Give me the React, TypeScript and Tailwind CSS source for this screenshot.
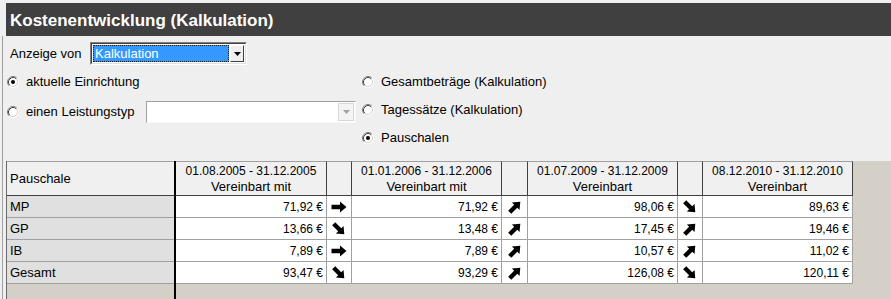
import React from 'react';

type Dir = 'right' | 'up' | 'down';

interface Row {
  label: string;
  values: string[];
  arrows: Dir[];
}

const rows: Row[] = [
  { label: 'MP', values: ['71,92 €', '71,92 €', '98,06 €', '89,63 €'], arrows: ['right', 'up', 'down'] },
  { label: 'GP', values: ['13,66 €', '13,48 €', '17,45 €', '19,46 €'], arrows: ['down', 'up', 'up'] },
  { label: 'IB', values: ['7,89 €', '7,89 €', '10,57 €', '11,02 €'], arrows: ['right', 'up', 'up'] },
  { label: 'Gesamt', values: ['93,47 €', '93,29 €', '126,08 €', '120,11 €'], arrows: ['down', 'up', 'down'] },
];

const periods = [
  { range: '01.08.2005 - 31.12.2005', note: 'Vereinbart mit' },
  { range: '01.01.2006 - 31.12.2006', note: 'Vereinbart mit' },
  { range: '01.07.2009 - 31.12.2009', note: 'Vereinbart' },
  { range: '08.12.2010 - 31.12.2010', note: 'Vereinbart' },
];

// widths of the value columns and of the arrow columns between them
const valueWidths = ['w-[151px]', 'w-[150px]', 'w-[150px]', 'w-[150px]'];
const arrowWidths = ['w-[25px]', 'w-[26px]', 'w-[25px]'];

// Thick black trend arrow, rotated for up/down
const Arrow = ({ dir }: { dir: Dir }) => {
  const angle = dir === 'right' ? 0 : dir === 'up' ? -45 : 45;
  return (
    <svg width="18" height="18" viewBox="0 0 18 18">
      <g transform={`rotate(${angle} 9 9)`}>
        <path d="M1.5 6.8H10V3.6L16.5 9L10 14.4V11.2H1.5Z" fill="#000" />
      </g>
    </svg>
  );
};

// Classic sunken radio button
const Radio = ({ checked }: { checked?: boolean }) => (
  <svg width="12" height="12" viewBox="0 0 12 12" className="shrink-0">
    <circle cx="6" cy="6" r="5" fill="#fff" />
    <path d="M9.89 2.11A5.5 5.5 0 0 0 2.11 9.89" stroke="#808080" fill="none" />
    <path d="M2.11 9.89A5.5 5.5 0 0 0 9.89 2.11" stroke="#fff" fill="none" />
    <path d="M9.18 2.82A4.5 4.5 0 0 0 2.82 9.18" stroke="#404040" fill="none" />
    <path d="M2.82 9.18A4.5 4.5 0 0 0 9.18 2.82" stroke="#d4d0c8" fill="none" />
    {checked && <circle cx="6" cy="6" r="2" fill="#000" />}
  </svg>
);

const RadioOption = ({ label, checked, className }: { label: string; checked?: boolean; className?: string }) => (
  <div className={`flex items-center gap-[7px] ${className ?? ''}`}>
    <Radio checked={checked} />
    <span className="text-[13px] text-black whitespace-nowrap">{label}</span>
  </div>
);

const DropTriangle = ({ color }: { color: string }) => (
  <svg width="7" height="4" viewBox="0 0 7 4">
    <path d="M0 0H7L3.5 4Z" fill={color} />
  </svg>
);

export default function App() {
  return (
    <div className="w-[891px] h-[299px] bg-[#efefef] pt-[3px] overflow-hidden font-['Liberation_Sans',Arial,sans-serif]">
      {/* Title bar */}
      <div className="ml-[6px] h-[33px] bg-[#404040] flex items-center pl-[4px] pt-[2px] text-white font-bold text-[17px]">
        Kostenentwicklung (Kalkulation)
      </div>

      <div className="ml-[2px] border-l border-[#a0a0a0] h-[263px] flex flex-col">
        {/* Controls */}
        <div className="h-[125px] shrink-0">
          <div className="mt-[6px] h-[23px] flex items-center pl-[7px]">
            <span className="w-[80px] shrink-0 text-[13px] text-black">Anzeige von</span>
            <div className="w-[157px] h-[23px] flex border border-t-[#808080] border-l-[#808080] border-b-white border-r-white">
              <div className="flex-1 flex border border-t-[#404040] border-l-[#404040] border-b-[#e0e0e0] border-r-[#e0e0e0] bg-white p-[1px]">
                <div className="flex-1 bg-[#3399ff] border border-dotted border-[#1a1a1a] flex items-center pl-[1px] text-white text-[13px]">
                  Kalkulation
                </div>
                <div className="w-[14px] ml-[1px] bg-[#efefef] border border-t-white border-l-white border-b-[#404040] border-r-[#404040] flex items-center justify-center">
                  <DropTriangle color="#000" />
                </div>
              </div>
            </div>
          </div>

          <div className="mt-[3px] flex">
            <div className="w-[359px] pl-[4px] flex flex-col">
              <RadioOption label="aktuelle Einrichtung" checked className="h-[28px]" />
              <div className="mt-[5px] h-[22px] flex items-center">
                <RadioOption label="einen Leistungstyp" className="w-[139px]" />
                <div className="w-[210px] h-[22px] bg-white border border-t-[#a0a0a0] border-l-[#a0a0a0] border-b-[#f8f8f8] border-r-[#f8f8f8] flex justify-end p-[1px]">
                  <div className="w-[16px] border border-[#d8d8d8] bg-[#f4f4f4] flex items-center justify-center">
                    <DropTriangle color="#a0a0a0" />
                  </div>
                </div>
              </div>
            </div>
            <div className="flex flex-col">
              <RadioOption label="Gesamtbeträge (Kalkulation)" className="h-[28px]" />
              <RadioOption label="Tagessätze (Kalkulation)" className="h-[28px]" />
              <RadioOption label="Pauschalen" checked className="h-[28px]" />
            </div>
          </div>
        </div>

        {/* Grid */}
        <div className="ml-[3px] flex-1 bg-[#d4d0c8] border-l border-[#696969] flex text-black">
          {/* Frozen column */}
          <div className="w-[167px] shrink-0 flex flex-col">
            <div className="h-[35px] bg-[#f0f0f0] border-t border-t-[#a0a0a0] border-b border-b-[#404040] flex items-center pl-[3px] text-[13px]">
              Pauschale
            </div>
            {rows.map((row) => (
              <div
                key={row.label}
                className="h-[22px] bg-[#e0e0e0] border-b border-[#a0a0a0] flex items-center pl-[3px] text-[13px]"
              >
                {row.label}
              </div>
            ))}
          </div>

          <div className="w-[2px] bg-black shrink-0" />

          {/* Period columns */}
          <div className="flex flex-col">
            <div className="flex h-[35px]">
              {periods.map((p, i) => (
                <React.Fragment key={p.range}>
                  <div
                    className={`${valueWidths[i]} h-[35px] bg-[#f0f0f0] border-t border-t-[#a0a0a0] border-b border-b-[#404040] border-r border-r-[#404040] flex flex-col items-center justify-center leading-[16px]`}
                  >
                    <span className="text-[12px]">{p.range}</span>
                    <span className="text-[13px]">{p.note}</span>
                  </div>
                  {i < 3 && (
                    <div
                      className={`${arrowWidths[i]} h-[35px] bg-[#f0f0f0] border-t border-t-[#a0a0a0] border-b border-b-[#404040] border-r border-r-[#404040]`}
                    />
                  )}
                </React.Fragment>
              ))}
            </div>
            {rows.map((row) => (
              <div key={row.label} className="flex h-[22px]">
                {row.values.map((v, i) => (
                  <React.Fragment key={i}>
                    <div
                      className={`${valueWidths[i]} h-[22px] bg-white border-b border-r border-[#a0a0a0] flex items-center justify-end pr-[3px] text-[12px]`}
                    >
                      {v}
                    </div>
                    {i < 3 && (
                      <div
                        className={`${arrowWidths[i]} h-[22px] bg-white border-b border-r border-[#a0a0a0] flex items-center justify-center`}
                      >
                        <Arrow dir={row.arrows[i]} />
                      </div>
                    )}
                  </React.Fragment>
                ))}
              </div>
            ))}
          </div>
        </div>
      </div>
    </div>
  );
}
